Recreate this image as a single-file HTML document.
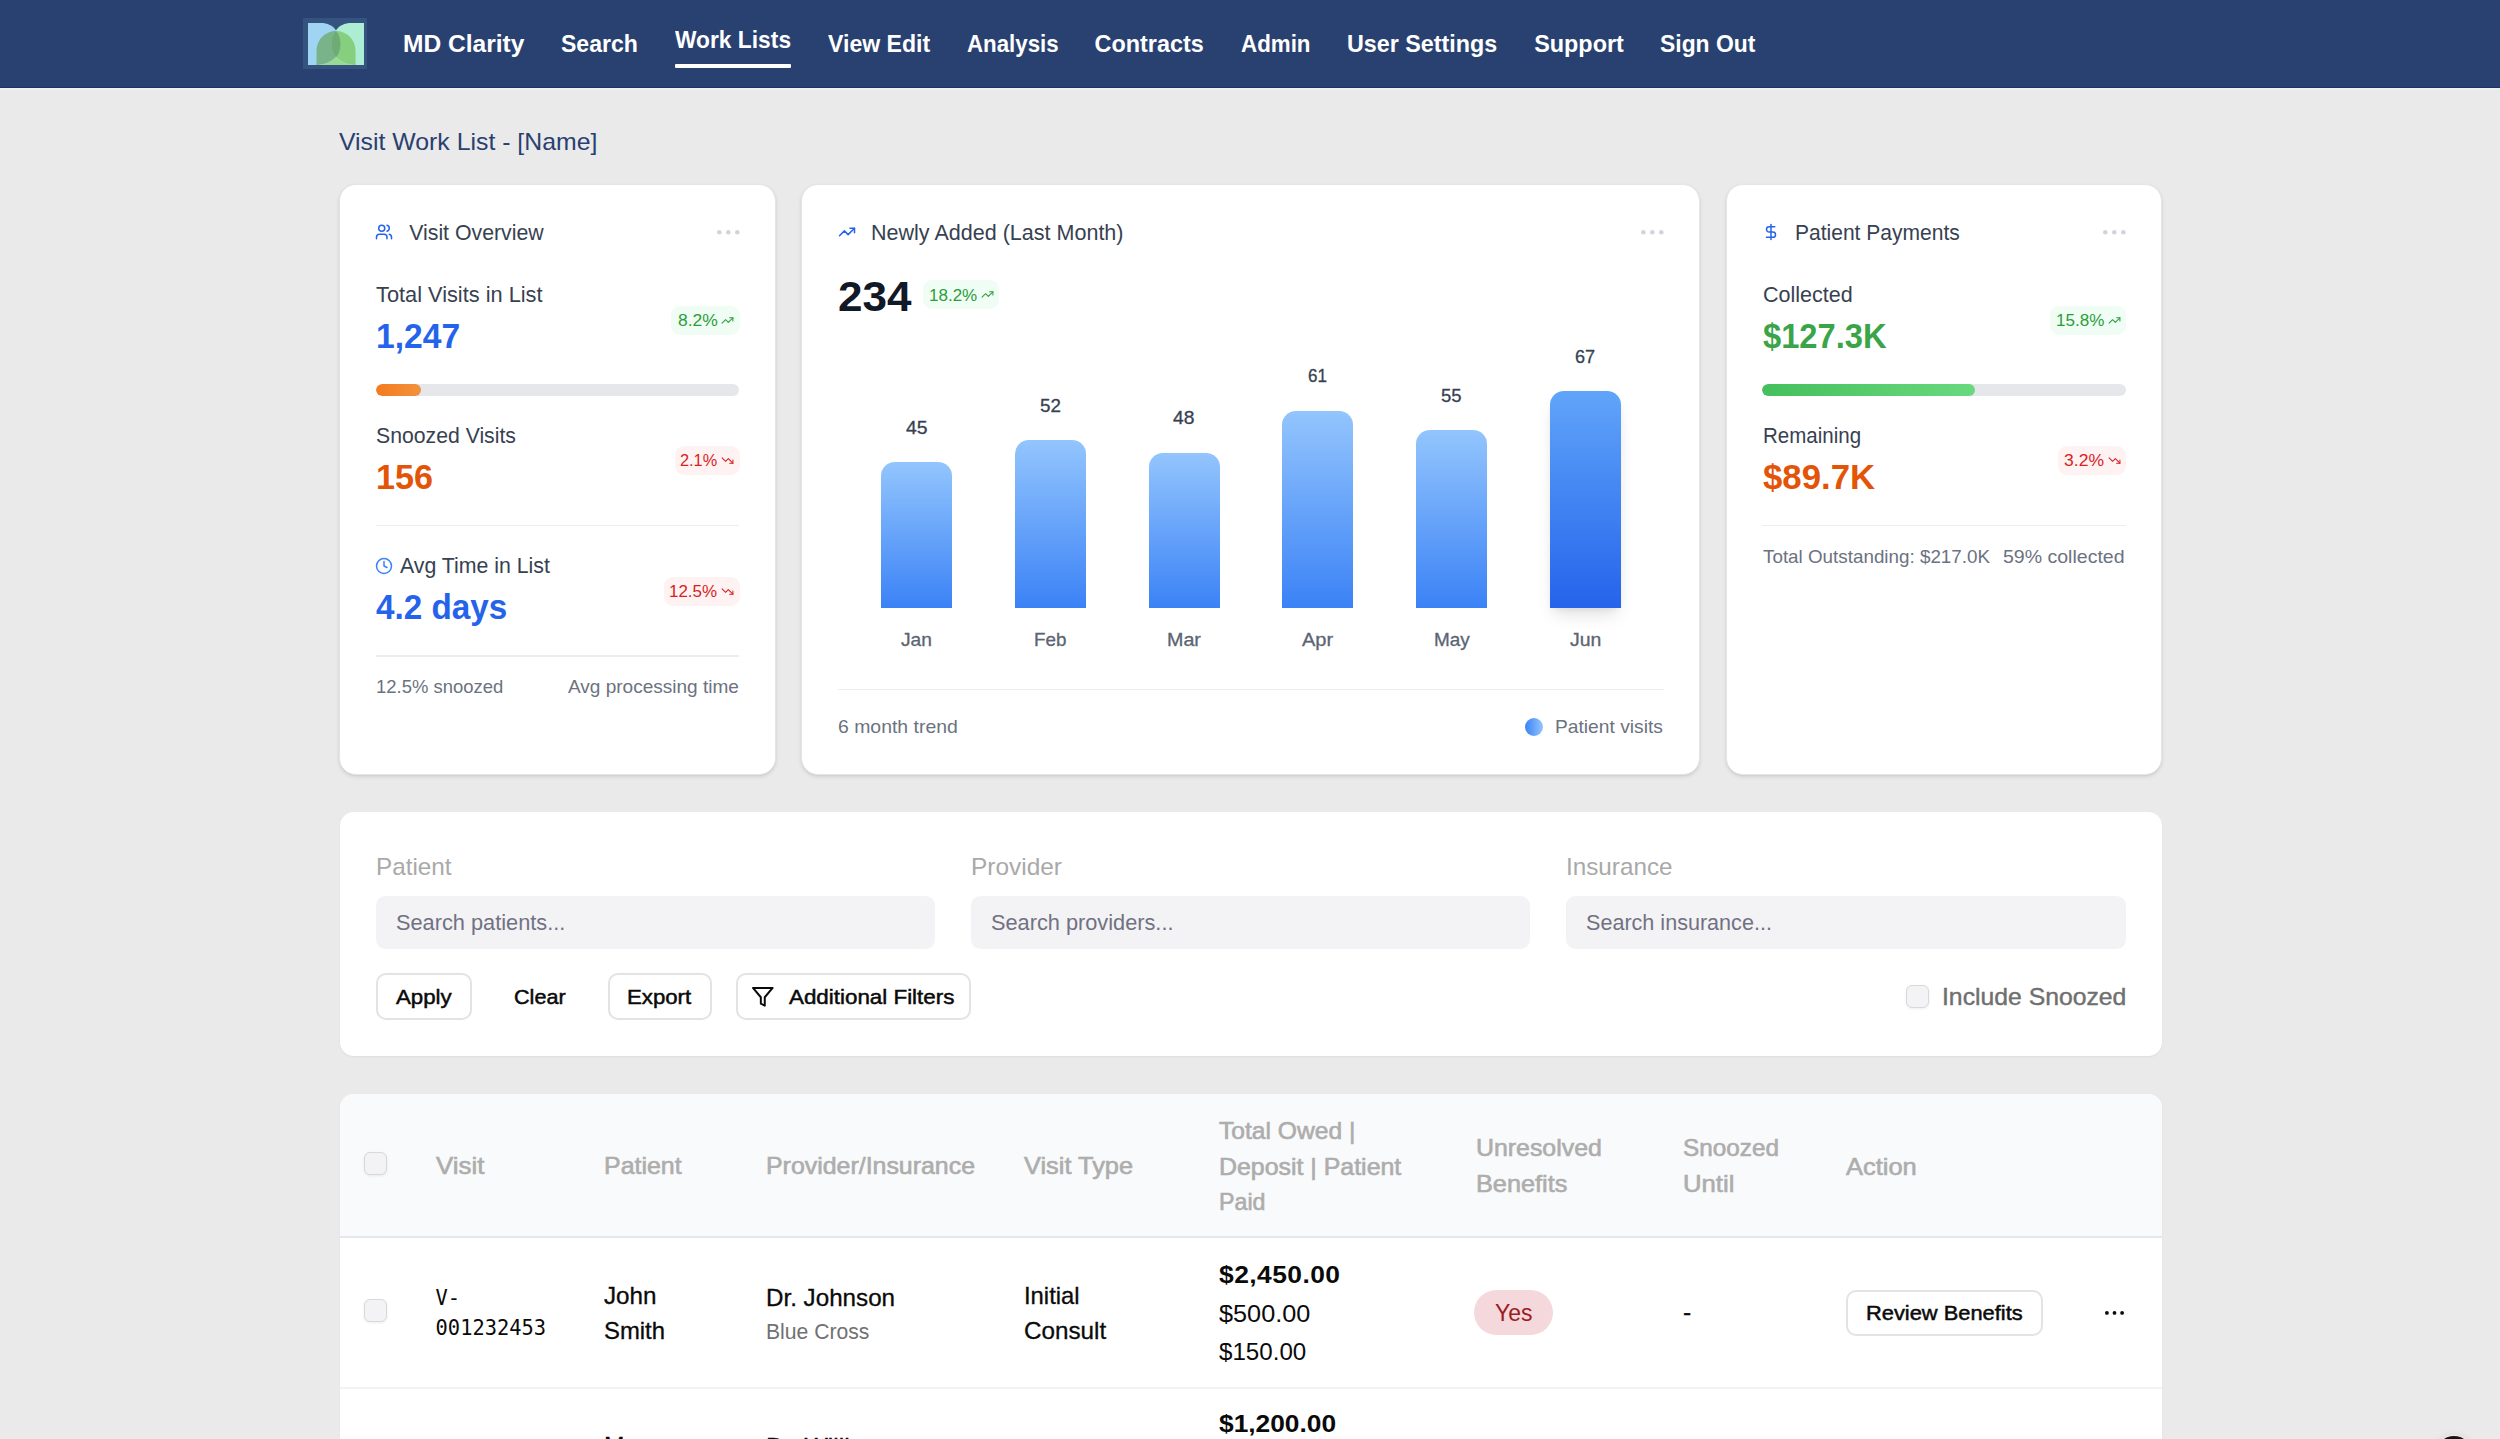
<!DOCTYPE html>
<html lang="en"><head><meta charset="utf-8"><title>Visit Work List</title>
<style>
*{box-sizing:border-box;margin:0;padding:0}
html,body{width:2500px;height:1439px;overflow:hidden;background:#eaeaea}
body{position:relative;font-family:"Liberation Sans",sans-serif;color:#0a0a0a}
.t{position:absolute;white-space:nowrap;line-height:1;display:block;transform-origin:0 0}
nav{position:absolute;left:0;top:0;width:2500px;height:88px;background:#294171;border-bottom:1px solid #18326a;box-shadow:0 1.5px 0 #efefee;z-index:2}
nav a{text-decoration:none}
.logo{position:absolute;left:303px;top:18px;width:64px;height:51px;background:#34547f}
.logo svg{position:absolute;left:5px;top:5px}
.ul{position:absolute;height:4px;background:#fff;border-radius:1px}
main{position:absolute;left:0;top:88px;width:2500px;height:1351px}
.card{position:absolute;background:#fff;border:1px solid #e3e5ea;border-radius:17px;box-shadow:0 2px 4px rgba(0,0,0,.09),0 1px 2px rgba(0,0,0,.05)}
.panel{position:absolute;background:#fff;border-radius:14px;box-shadow:0 1px 2px rgba(20,30,60,.06)}
.abs{position:absolute}
.hr{position:absolute;height:1.5px;background:#eaedf1}
.badge{position:absolute;border-radius:9px}
.bg-g{background:#f0fdf4}.bg-r{background:#fef2f2}
.track{position:absolute;height:12px;border-radius:6px;background:#e5e7eb;overflow:hidden}
.fill{position:absolute;left:0;top:0;height:12px;border-radius:6px}
.bar{position:absolute;border-radius:14px 14px 0 0;background:linear-gradient(180deg,#93c5fd,#3b82f6)}
.bar.hi{background:linear-gradient(180deg,#60a5fa,#2563eb);box-shadow:0 10px 18px -4px rgba(0,0,0,.12),0 4px 8px -4px rgba(0,0,0,.1)}
.inp{position:absolute;height:53px;background:#f3f3f5;border-radius:9.5px}
.btn{position:absolute;height:46.6px;border:2px solid #e3e3e3;border-radius:10px;background:#fff;font:inherit;color:inherit;padding:0;text-align:left;overflow:visible;cursor:pointer}
.btn.ghost{border-color:transparent;background:transparent}
h1,h2{font:inherit;font-weight:400}
.cb{position:absolute;width:23px;height:23px;border:1.7px solid #d8d8d8;border-radius:6px;background:#f3f3f5;box-shadow:0 1px 3px rgba(0,0,0,.07)}
.pill{position:absolute;border-radius:23px;background:#f5d8dc}
</style></head>
<body>
<nav>
<div class="logo"><svg width="56" height="42" viewBox="0 0 56 42"><defs><clipPath id="lc"><rect width="56" height="42"/></clipPath></defs><g clip-path="url(#lc)"><path d="M0 0H15C22 1 26 4 28 7.5V42H0Z" fill="#a0d4f3"/><path d="M56 0H41C34 1 30 4 28 7.5V42H56Z" fill="#acedd4"/><path d="M8.5 42V27A19.5 19.5 0 0 1 28 8C34 14 34 28 28 34C22 40 14 42 8.5 42Z" fill="#78b38a"/><path d="M47.5 42V27A19.5 19.5 0 0 0 28 8C22 14 22 28 28 34C34 40 42 42 47.5 42Z" fill="#86cf7f"/><path d="M28 8C34 14 34 28 28 34C22 28 22 14 28 8Z" fill="#6fab75"/><path d="M8.5 42H47.5C40 42 32 39 28 34C24 39 16 42 8.5 42Z" fill="#99da92"/></g></svg></div>
<a><span class="t" style="left:403.4px;top:31.00px;font-size:23.4px;line-height:26px;color:#fff;font-weight:700;transform:scaleX(1.050);">MD Clarity</span></a>
<a><span class="t" style="left:561.0px;top:31.00px;font-size:23.4px;line-height:26px;color:#fff;font-weight:700;transform:scaleX(0.985);">Search</span></a>
<a><span class="t" style="left:675.0px;top:27.00px;font-size:23.4px;line-height:26px;color:#fff;font-weight:700;transform:scaleX(0.974);">Work Lists</span></a>
<a><span class="t" style="left:827.7px;top:31.00px;font-size:23.4px;line-height:26px;color:#fff;font-weight:700;transform:scaleX(0.987);">View Edit</span></a>
<a><span class="t" style="left:967.0px;top:31.00px;font-size:23.4px;line-height:26px;color:#fff;font-weight:700;transform:scaleX(0.953);">Analysis</span></a>
<a><span class="t" style="left:1094.6px;top:31.00px;font-size:23.4px;line-height:26px;color:#fff;font-weight:700;">Contracts</span></a>
<a><span class="t" style="left:1241.0px;top:31.00px;font-size:23.4px;line-height:26px;color:#fff;font-weight:700;transform:scaleX(0.955);">Admin</span></a>
<a><span class="t" style="left:1347.4px;top:31.00px;font-size:23.4px;line-height:26px;color:#fff;font-weight:700;transform:scaleX(0.996);">User Settings</span></a>
<a><span class="t" style="left:1534.2px;top:31.00px;font-size:23.4px;line-height:26px;color:#fff;font-weight:700;">Support</span></a>
<a><span class="t" style="left:1660.2px;top:31.00px;font-size:23.4px;line-height:26px;color:#fff;font-weight:700;transform:scaleX(0.979);">Sign Out</span></a>
<div class="ul" style="left:675px;top:64px;width:116px;height:3.5px"></div>
</nav>
<main>
<h1><span class="t" style="left:339.0px;top:41.00px;font-size:23.4px;line-height:26px;color:#294070;transform:scaleX(1.061);">Visit Work List - [Name]</span></h1>
<section class="card" style="left:339.4px;top:95.8px;width:436.8px;height:591px">
<svg class="abs" style="left:35.1px;top:38.2px" width="18" height="18" viewBox="0 0 24 24" fill="none" stroke="#2563eb" stroke-width="2" stroke-linecap="round" stroke-linejoin="round"><path d="M16 21v-2a4 4 0 0 0-4-4H6a4 4 0 0 0-4 4v2"/><circle cx="9" cy="7" r="4"/><path d="M22 21v-2a4 4 0 0 0-3-3.87"/><path d="M16 3.13a4 4 0 0 1 0 7.75"/></svg>
<h2><span class="t" style="left:68.8px;top:36.20px;font-size:21.3px;line-height:24px;color:#374151;">Visit Overview</span></h2>
<svg class="abs" style="left:375.3px;top:43.9px" width="24.6" height="6.6" fill="#d1d5db"><circle cx="3.30" cy="3.30" r="2.3"/><circle cx="12.30" cy="3.30" r="2.3"/><circle cx="21.30" cy="3.30" r="2.3"/></svg>
<span class="t" style="left:35.9px;top:98.20px;font-size:21.3px;line-height:24px;color:#374151;transform:scaleX(1.022);">Total Visits in List</span>
<span class="t" style="left:35.9px;top:132.20px;font-size:34.3px;line-height:38px;color:#2563eb;font-weight:700;transform:scaleX(0.980);">1,247</span>
<div class="badge bg-g" style="left:331.0px;top:120.9px;width:68.3px;height:29.1px"></div>
<span class="t" style="left:337.4px;top:127.20px;font-size:15.6px;line-height:17px;color:#2a9d3a;transform:scaleX(1.122);">8.2%</span>
<svg class="abs" style="left:380.7px;top:128.8px" width="13" height="13" viewBox="0 0 24 24" fill="none" stroke="#2a9d3a" stroke-width="1.9" stroke-linecap="round" stroke-linejoin="round"><polyline points="22 7 13.5 15.5 8.5 10.5 2 17"/><polyline points="16 7 22 7 22 13"/></svg>
<div class="track" style="left:35.60000000000002px;top:199.5px;width:363.3px"><div class="fill" style="width:45.5px;background:linear-gradient(90deg,#f47a1e,#f2923c)"></div></div>
<span class="t" style="left:35.9px;top:239.20px;font-size:21.3px;line-height:24px;color:#374151;transform:scaleX(0.996);">Snoozed Visits</span>
<span class="t" style="left:35.9px;top:273.20px;font-size:34.3px;line-height:38px;color:#e45408;font-weight:700;transform:scaleX(0.995);">156</span>
<div class="badge bg-r" style="left:334.2px;top:261.5px;width:65.1px;height:29.1px"></div>
<span class="t" style="left:340.1px;top:267.20px;font-size:15.6px;line-height:17px;color:#d61f1f;transform:scaleX(1.046);">2.1%</span>
<svg class="abs" style="left:380.7px;top:269.4px" width="13" height="13" viewBox="0 0 24 24" fill="none" stroke="#d61f1f" stroke-width="1.9" stroke-linecap="round" stroke-linejoin="round"><polyline points="22 17 13.5 8.5 8.5 13.5 2 7"/><polyline points="16 17 22 17 22 11"/></svg>
<div class="hr" style="left:35.60000000000002px;top:339.9px;width:363.3px"></div>
<svg class="abs" style="left:35.1px;top:372.2px" width="18" height="18" viewBox="0 0 24 24" fill="none" stroke="#3b82f6" stroke-width="2" stroke-linecap="round" stroke-linejoin="round"><circle cx="12" cy="12" r="10"/><polyline points="12 6 12 12 16 14"/></svg>
<span class="t" style="left:59.6px;top:369.20px;font-size:21.3px;line-height:24px;color:#374151;">Avg Time in List</span>
<span class="t" style="left:35.9px;top:403.20px;font-size:34.3px;line-height:38px;color:#2563eb;font-weight:700;transform:scaleX(0.970);">4.2 days</span>
<div class="badge bg-r" style="left:323.4px;top:392.1px;width:75.9px;height:28.7px"></div>
<span class="t" style="left:329.1px;top:398.20px;font-size:15.6px;line-height:17px;color:#d61f1f;transform:scaleX(1.088);">12.5%</span>
<svg class="abs" style="left:380.7px;top:399.8px" width="13" height="13" viewBox="0 0 24 24" fill="none" stroke="#d61f1f" stroke-width="1.9" stroke-linecap="round" stroke-linejoin="round"><polyline points="22 17 13.5 8.5 8.5 13.5 2 7"/><polyline points="16 17 22 17 22 11"/></svg>
<div class="hr" style="left:35.60000000000002px;top:470.4px;width:363.3px"></div>
<span class="t" style="left:35.9px;top:492.20px;font-size:17.9px;line-height:20px;color:#6b7280;transform:scaleX(1.031);">12.5% snoozed</span>
<span class="t" style="left:227.6px;top:492.20px;font-size:17.9px;line-height:20px;color:#6b7280;transform:scaleX(1.063);">Avg processing time</span>
</section>
<section class="card" style="left:801px;top:95.8px;width:899.4px;height:591px">
<svg class="abs" style="left:36.0px;top:38.2px" width="18" height="18" viewBox="0 0 24 24" fill="none" stroke="#2563eb" stroke-width="2" stroke-linecap="round" stroke-linejoin="round"><polyline points="22 7 13.5 15.5 8.5 10.5 2 17"/><polyline points="16 7 22 7 22 13"/></svg>
<h2><span class="t" style="left:69.1px;top:36.20px;font-size:21.3px;line-height:24px;color:#374151;transform:scaleX(1.011);">Newly Added (Last Month)</span></h2>
<svg class="abs" style="left:837.7px;top:43.9px" width="24.6" height="6.6" fill="#d1d5db"><circle cx="3.30" cy="3.30" r="2.3"/><circle cx="12.30" cy="3.30" r="2.3"/><circle cx="21.30" cy="3.30" r="2.3"/></svg>
<span class="t" style="left:36.4px;top:88.20px;font-size:42.4px;line-height:47px;color:#111827;font-weight:700;transform:scaleX(1.039);">234</span>
<div class="badge bg-g" style="left:120.8px;top:95.7px;width:76.0px;height:29.0px"></div>
<span class="t" style="left:126.8px;top:102.20px;font-size:15.6px;line-height:17px;color:#2a9d3a;transform:scaleX(1.090);">18.2%</span>
<svg class="abs" style="left:178.5px;top:103.6px" width="13" height="13" viewBox="0 0 24 24" fill="none" stroke="#2a9d3a" stroke-width="1.9" stroke-linecap="round" stroke-linejoin="round"><polyline points="22 7 13.5 15.5 8.5 10.5 2 17"/><polyline points="16 7 22 7 22 13"/></svg>
<span class="t" style="left:103.8px;top:233.20px;font-size:17.9px;line-height:20px;color:#374151;transform:scaleX(1.082);-webkit-text-stroke:0.3px #374151;">45</span>
<div class="bar" style="left:79.0px;top:277.7px;width:71px;height:145.3px"></div>
<span class="t" style="left:99.0px;top:445.20px;font-size:18.2px;line-height:20px;color:#5b6472;transform:scaleX(1.055);-webkit-text-stroke:0.3px #5b6472;">Jan</span>
<span class="t" style="left:237.8px;top:211.20px;font-size:17.9px;line-height:20px;color:#374151;transform:scaleX(1.052);-webkit-text-stroke:0.3px #374151;">52</span>
<div class="bar" style="left:212.8px;top:255.1px;width:71px;height:167.9px"></div>
<span class="t" style="left:232.0px;top:445.20px;font-size:18.2px;line-height:20px;color:#5b6472;transform:scaleX(1.035);-webkit-text-stroke:0.3px #5b6472;">Feb</span>
<span class="t" style="left:371.3px;top:223.20px;font-size:17.9px;line-height:20px;color:#374151;transform:scaleX(1.077);-webkit-text-stroke:0.3px #374151;">48</span>
<div class="bar" style="left:346.5px;top:268.1px;width:71px;height:154.9px"></div>
<span class="t" style="left:365.0px;top:445.20px;font-size:18.2px;line-height:20px;color:#5b6472;transform:scaleX(1.083);-webkit-text-stroke:0.3px #5b6472;">Mar</span>
<span class="t" style="left:506.3px;top:181.20px;font-size:17.9px;line-height:20px;color:#374151;transform:scaleX(0.951);-webkit-text-stroke:0.3px #374151;">61</span>
<div class="bar" style="left:480.2px;top:226.1px;width:71px;height:196.9px"></div>
<span class="t" style="left:500.1px;top:445.20px;font-size:18.2px;line-height:20px;color:#5b6472;transform:scaleX(1.102);-webkit-text-stroke:0.3px #5b6472;">Apr</span>
<span class="t" style="left:639.2px;top:201.20px;font-size:17.9px;line-height:20px;color:#374151;transform:scaleX(1.032);-webkit-text-stroke:0.3px #374151;">55</span>
<div class="bar" style="left:614.0px;top:245.5px;width:71px;height:177.5px"></div>
<span class="t" style="left:631.6px;top:445.20px;font-size:18.2px;line-height:20px;color:#5b6472;transform:scaleX(1.041);-webkit-text-stroke:0.3px #5b6472;">May</span>
<span class="t" style="left:773.2px;top:162.20px;font-size:17.9px;line-height:20px;color:#374151;transform:scaleX(1.012);-webkit-text-stroke:0.3px #374151;">67</span>
<div class="bar hi" style="left:747.8px;top:206.7px;width:71px;height:216.3px"></div>
<span class="t" style="left:767.6px;top:445.20px;font-size:18.2px;line-height:20px;color:#5b6472;transform:scaleX(1.068);-webkit-text-stroke:0.3px #5b6472;">Jun</span>
<div class="hr" style="left:36px;top:504.2px;width:826px"></div>
<span class="t" style="left:36.4px;top:532.20px;font-size:17.9px;line-height:20px;color:#6b7280;transform:scaleX(1.085);">6 month trend</span>
<div class="abs" style="left:722.7px;top:533.2px;width:18px;height:18px;border-radius:9px;background:linear-gradient(90deg,#3b82f6,#93c5fd)"></div>
<span class="t" style="left:753.3px;top:532.20px;font-size:17.9px;line-height:20px;color:#6b7280;transform:scaleX(1.074);">Patient visits</span>
</section>
<section class="card" style="left:1725.8px;top:95.8px;width:436.4px;height:591px">
<svg class="abs" style="left:35.5px;top:38.2px" width="18" height="18" viewBox="0 0 24 24" fill="none" stroke="#2563eb" stroke-width="2" stroke-linecap="round" stroke-linejoin="round"><line x1="12" x2="12" y1="2" y2="22"/><path d="M17 5H9.5a3.5 3.5 0 0 0 0 7h5a3.5 3.5 0 0 1 0 7H6"/></svg>
<h2><span class="t" style="left:68.2px;top:36.20px;font-size:21.3px;line-height:24px;color:#374151;transform:scaleX(0.987);">Patient Payments</span></h2>
<svg class="abs" style="left:374.9px;top:43.9px" width="24.6" height="6.6" fill="#d1d5db"><circle cx="3.30" cy="3.30" r="2.3"/><circle cx="12.30" cy="3.30" r="2.3"/><circle cx="21.30" cy="3.30" r="2.3"/></svg>
<span class="t" style="left:36.0px;top:98.20px;font-size:21.3px;line-height:24px;color:#374151;transform:scaleX(1.011);">Collected</span>
<span class="t" style="left:36.6px;top:132.20px;font-size:34.3px;line-height:38px;color:#3aa548;font-weight:700;transform:scaleX(0.953);">$127.3K</span>
<div class="badge bg-g" style="left:323.1px;top:120.9px;width:76.3px;height:29.1px"></div>
<span class="t" style="left:328.9px;top:127.20px;font-size:15.6px;line-height:17px;color:#2a9d3a;transform:scaleX(1.095);">15.8%</span>
<svg class="abs" style="left:380.8px;top:128.8px" width="13" height="13" viewBox="0 0 24 24" fill="none" stroke="#2a9d3a" stroke-width="1.9" stroke-linecap="round" stroke-linejoin="round"><polyline points="22 7 13.5 15.5 8.5 10.5 2 17"/><polyline points="16 7 22 7 22 13"/></svg>
<div class="track" style="left:35.6px;top:199.5px;width:363.3px"><div class="fill" style="width:213px;background:linear-gradient(90deg,#45bf5c,#69d97f)"></div></div>
<span class="t" style="left:36.0px;top:239.20px;font-size:21.3px;line-height:24px;color:#374151;transform:scaleX(0.963);">Remaining</span>
<span class="t" style="left:36.6px;top:273.20px;font-size:34.3px;line-height:38px;color:#e45408;font-weight:700;transform:scaleX(1.014);">$89.7K</span>
<div class="badge bg-r" style="left:331.5px;top:261.5px;width:67.9px;height:29.1px"></div>
<span class="t" style="left:337.4px;top:267.20px;font-size:15.6px;line-height:17px;color:#d61f1f;transform:scaleX(1.125);">3.2%</span>
<svg class="abs" style="left:380.8px;top:269.4px" width="13" height="13" viewBox="0 0 24 24" fill="none" stroke="#d61f1f" stroke-width="1.9" stroke-linecap="round" stroke-linejoin="round"><polyline points="22 17 13.5 8.5 8.5 13.5 2 7"/><polyline points="16 17 22 17 22 11"/></svg>
<div class="hr" style="left:35.6px;top:339.9px;width:363.3px"></div>
<span class="t" style="left:36.0px;top:362.20px;font-size:17.9px;line-height:20px;color:#6b7280;transform:scaleX(1.052);">Total Outstanding: $217.0K</span>
<span class="t" style="left:276.5px;top:362.20px;font-size:17.9px;line-height:20px;color:#6b7280;transform:scaleX(1.091);">59% collected</span>
</section>
<section class="panel" style="left:340px;top:724.3px;width:1821.5px;height:243.3px">
<span class="t" style="left:35.8px;top:41.70px;font-size:23.2px;line-height:26px;color:#a9a9a9;transform:scaleX(1.047);">Patient</span>
<div class="inp" style="left:35.8px;top:83.3px;width:559.6px"></div>
<span class="t" style="left:55.8px;top:98.70px;font-size:21.3px;line-height:24px;color:#717182;transform:scaleX(1.022);">Search patients...</span>
<span class="t" style="left:630.6px;top:41.70px;font-size:23.2px;line-height:26px;color:#a9a9a9;transform:scaleX(1.054);">Provider</span>
<div class="inp" style="left:630.6px;top:83.3px;width:559.6px"></div>
<span class="t" style="left:650.6px;top:98.70px;font-size:21.3px;line-height:24px;color:#717182;transform:scaleX(1.021);">Search providers...</span>
<span class="t" style="left:1226.2px;top:41.70px;font-size:23.2px;line-height:26px;color:#a9a9a9;transform:scaleX(1.046);">Insurance</span>
<div class="inp" style="left:1226.2px;top:83.3px;width:559.6px"></div>
<span class="t" style="left:1246.2px;top:98.70px;font-size:21.3px;line-height:24px;color:#717182;transform:scaleX(1.013);">Search insurance...</span>
<button type="button" class="btn" style="left:36.0px;top:160.7px;width:95.6px">
<span class="t" style="left:18.1px;top:10.00px;font-size:20.9px;line-height:23px;color:#0a0a0a;transform:scaleX(1.066);-webkit-text-stroke:0.5px #0a0a0a;">Apply</span>
</button>
<button type="button" class="btn ghost" style="left:154.0px;top:160.7px;width:91.0px">
<span class="t" style="left:17.6px;top:10.00px;font-size:20.9px;line-height:23px;color:#0a0a0a;transform:scaleX(1.033);-webkit-text-stroke:0.5px #0a0a0a;">Clear</span>
</button>
<button type="button" class="btn" style="left:268.0px;top:160.7px;width:103.6px">
<span class="t" style="left:17.1px;top:10.00px;font-size:20.9px;line-height:23px;color:#0a0a0a;transform:scaleX(1.063);-webkit-text-stroke:0.5px #0a0a0a;">Export</span>
</button>
<button type="button" class="btn" style="left:395.5px;top:160.7px;width:235.3px">
<svg class="abs" style="left:13.7px;top:9.6px" width="23.6" height="23.6" viewBox="0 0 24 24" fill="none" stroke="#0a0a0a" stroke-width="2" stroke-linecap="round" stroke-linejoin="round"><polygon points="22 3 2 3 10 12.46 10 19 14 21 14 12.46 22 3"/></svg>
<span class="t" style="left:51.0px;top:10.00px;font-size:20.9px;line-height:23px;color:#0a0a0a;transform:scaleX(1.071);-webkit-text-stroke:0.5px #0a0a0a;">Additional Filters</span>
</button>
<div class="cb" style="left:1565.5px;top:172.4px"></div>
<span class="t" style="left:1601.6px;top:171.70px;font-size:23.2px;line-height:26px;color:#6f6f6f;transform:scaleX(1.067);-webkit-text-stroke:0.4px #6f6f6f;">Include Snoozed</span>
</section>
<section class="panel" style="left:340px;top:1006px;width:1821.5px;height:400px;overflow:hidden">
<div class="abs" style="left:0;top:0;width:1821.5px;height:144.4px;background:#f9fafb;border-bottom:2px solid #e5e7eb"></div>
<div class="cb" style="left:24.2px;top:58.3px"></div>
<span class="t" style="left:95.6px;top:59.00px;font-size:23.2px;line-height:26px;color:#adadad;transform:scaleX(1.116);-webkit-text-stroke:0.6px #adadad;">Visit</span>
<span class="t" style="left:263.7px;top:59.00px;font-size:23.2px;line-height:26px;color:#adadad;transform:scaleX(1.075);-webkit-text-stroke:0.6px #adadad;">Patient</span>
<span class="t" style="left:426.3px;top:59.00px;font-size:23.2px;line-height:26px;color:#adadad;transform:scaleX(1.074);-webkit-text-stroke:0.6px #adadad;">Provider/Insurance</span>
<span class="t" style="left:684.1px;top:59.00px;font-size:23.2px;line-height:26px;color:#adadad;transform:scaleX(1.094);-webkit-text-stroke:0.6px #adadad;">Visit Type</span>
<span class="t" style="left:879.1px;top:24.00px;font-size:23.2px;line-height:26px;color:#adadad;transform:scaleX(1.061);-webkit-text-stroke:0.6px #adadad;">Total Owed |</span>
<span class="t" style="left:879.1px;top:60.00px;font-size:23.2px;line-height:26px;color:#adadad;transform:scaleX(1.074);-webkit-text-stroke:0.6px #adadad;">Deposit | Patient</span>
<span class="t" style="left:879.1px;top:95.00px;font-size:23.2px;line-height:26px;color:#adadad;-webkit-text-stroke:0.6px #adadad;">Paid</span>
<span class="t" style="left:1135.5px;top:41.00px;font-size:23.2px;line-height:26px;color:#adadad;transform:scaleX(1.073);-webkit-text-stroke:0.6px #adadad;">Unresolved</span>
<span class="t" style="left:1135.5px;top:77.00px;font-size:23.2px;line-height:26px;color:#adadad;transform:scaleX(1.091);-webkit-text-stroke:0.6px #adadad;">Benefits</span>
<span class="t" style="left:1342.7px;top:41.00px;font-size:23.2px;line-height:26px;color:#adadad;transform:scaleX(1.048);-webkit-text-stroke:0.6px #adadad;">Snoozed</span>
<span class="t" style="left:1342.7px;top:77.00px;font-size:23.2px;line-height:26px;color:#adadad;transform:scaleX(1.108);-webkit-text-stroke:0.6px #adadad;">Until</span>
<span class="t" style="left:1506.3px;top:60.00px;font-size:23.2px;line-height:26px;color:#adadad;transform:scaleX(1.098);-webkit-text-stroke:0.6px #adadad;">Action</span>
<div class="abs" style="left:0;top:293.0px;width:1821.5px;height:2px;background:#f1f2f4"></div>
<div class="cb" style="left:24.2px;top:205.3px"></div>
<span class="t" style="left:95.6px;top:192.00px;font-size:20.4px;line-height:24px;color:#0a0a0a;font-family:'DejaVu Sans Mono','Liberation Mono',monospace;">V-</span>
<span class="t" style="left:95.6px;top:222.00px;font-size:20.4px;line-height:24px;color:#0a0a0a;font-family:'DejaVu Sans Mono','Liberation Mono',monospace;">001232453</span>
<span class="t" style="left:263.5px;top:189.00px;font-size:23.2px;line-height:26px;color:#0a0a0a;transform:scaleX(1.045);-webkit-text-stroke:0.3px #0a0a0a;">John</span>
<span class="t" style="left:263.5px;top:224.00px;font-size:23.2px;line-height:26px;color:#0a0a0a;transform:scaleX(1.029);-webkit-text-stroke:0.3px #0a0a0a;">Smith</span>
<span class="t" style="left:426.1px;top:191.00px;font-size:23.2px;line-height:26px;color:#0a0a0a;transform:scaleX(1.043);-webkit-text-stroke:0.3px #0a0a0a;">Dr. Johnson</span>
<span class="t" style="left:426.0px;top:226.00px;font-size:21.3px;line-height:24px;color:#717171;transform:scaleX(0.993);">Blue Cross</span>
<span class="t" style="left:683.9px;top:189.00px;font-size:23.2px;line-height:26px;color:#0a0a0a;transform:scaleX(1.027);-webkit-text-stroke:0.3px #0a0a0a;">Initial</span>
<span class="t" style="left:683.9px;top:224.00px;font-size:23.2px;line-height:26px;color:#0a0a0a;transform:scaleX(1.045);-webkit-text-stroke:0.3px #0a0a0a;">Consult</span>
<span class="t" style="left:878.8px;top:168.00px;font-size:23.2px;line-height:26px;color:#0a0a0a;font-weight:700;letter-spacing:0.38px;transform:scaleX(1.140);">$2,450.00</span>
<span class="t" style="left:878.8px;top:207.00px;font-size:23.2px;line-height:26px;color:#0a0a0a;transform:scaleX(1.089);">$500.00</span>
<span class="t" style="left:878.8px;top:245.00px;font-size:23.2px;line-height:26px;color:#0a0a0a;transform:scaleX(1.041);">$150.00</span>
<div class="pill" style="left:1134.4px;top:196.0px;width:78.4px;height:45.4px"></div>
<span class="t" style="left:1154.9px;top:206.00px;font-size:23.2px;line-height:26px;color:#9b1c24;transform:scaleX(0.992);">Yes</span>
<span class="t" style="left:1343.0px;top:205.00px;font-size:23.2px;line-height:26px;color:#0a0a0a;transform:scaleX(1.058);-webkit-text-stroke:0.3px #0a0a0a;">-</span>
<button type="button" class="btn" style="left:1506.0px;top:195.5px;width:197px">
<span class="t" style="left:17.8px;top:9.50px;font-size:20.9px;line-height:23px;color:#0a0a0a;transform:scaleX(1.046);-webkit-text-stroke:0.5px #0a0a0a;">Review Benefits</span>
</button>
<svg class="abs" style="left:1763.5px;top:215.9px" width="21.0" height="5.8" fill="#0a0a0a"><circle cx="2.90" cy="2.90" r="1.9"/><circle cx="10.50" cy="2.90" r="1.9"/><circle cx="18.10" cy="2.90" r="1.9"/></svg>
<div class="cb" style="left:24.2px;top:355.3px"></div>
<span class="t" style="left:95.6px;top:342.00px;font-size:20.4px;line-height:24px;color:#0a0a0a;font-family:'DejaVu Sans Mono','Liberation Mono',monospace;">V-</span>
<span class="t" style="left:263.5px;top:339.00px;font-size:23.2px;line-height:26px;color:#0a0a0a;transform:scaleX(1.062);-webkit-text-stroke:0.3px #0a0a0a;">Mary</span>
<span class="t" style="left:426.1px;top:340.00px;font-size:23.2px;line-height:26px;color:#0a0a0a;transform:scaleX(1.067);-webkit-text-stroke:0.3px #0a0a0a;">Dr. Williams</span>
<span class="t" style="left:683.9px;top:356.00px;font-size:23.2px;line-height:26px;color:#0a0a0a;transform:scaleX(1.042);-webkit-text-stroke:0.3px #0a0a0a;">Follow-up</span>
<span class="t" style="left:878.8px;top:317.00px;font-size:23.2px;line-height:26px;color:#0a0a0a;font-weight:700;transform:scaleX(1.135);">$1,200.00</span>
<span class="t" style="left:878.8px;top:356.00px;font-size:23.2px;line-height:26px;color:#0a0a0a;transform:scaleX(1.089);">$300.00</span>
</section>
</main>
<div class="abs" style="left:2436px;top:1436.4px;width:36px;height:36px;border-radius:18px;background:#141414;box-shadow:0 0 0 1px rgba(255,255,255,.55),0 0 10px rgba(0,0,0,.10)"></div>
</body></html>
